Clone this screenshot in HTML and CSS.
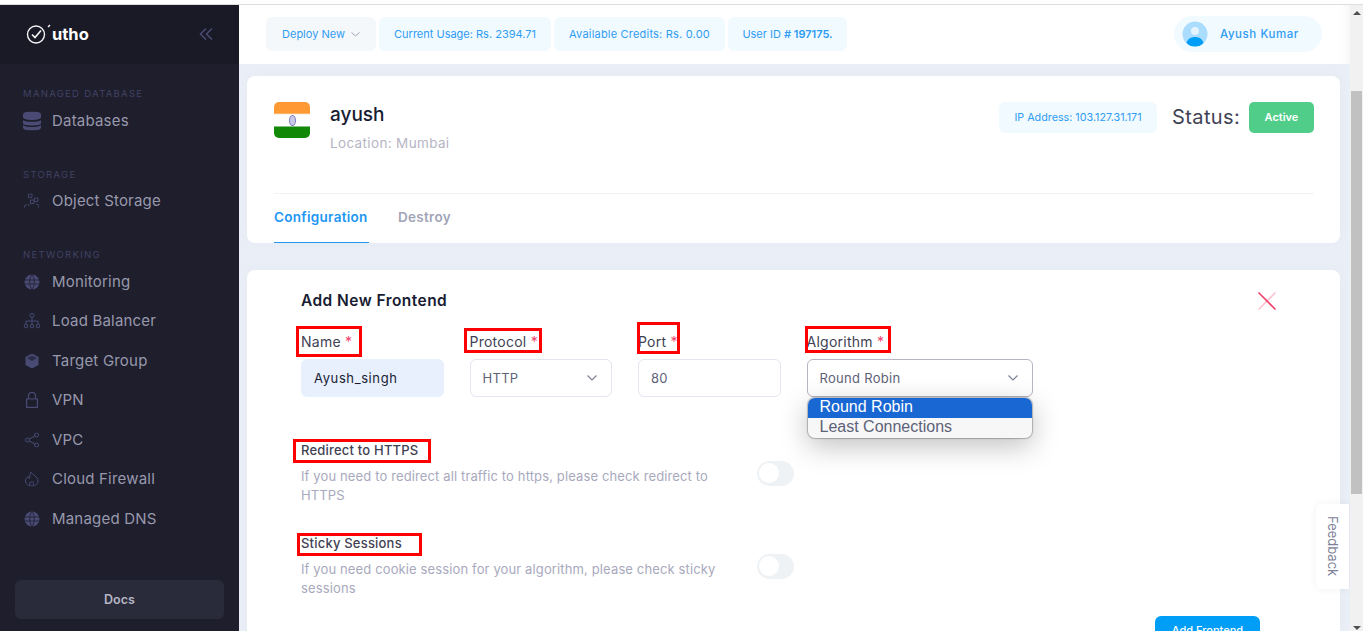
FILE: index.html
```html
<!DOCTYPE html>
<html lang="en">
<head>
    <meta charset="UTF-8">
    <meta name="viewport" content="width=device-width, initial-scale=1.0">
    <title>Utho - Add New Frontend</title>
    <link rel="stylesheet" href="styles.css">
</head>
<body>
    <div class="top-line"></div>
    <div class="app">
        <aside class="sidebar">
            <div class="brand">
                <div class="logo">
                    <svg width="26" height="24" viewBox="0 0 26 24" fill="none" stroke="#f4f4f4">
                        <circle cx="10" cy="12.500" r="8.500" stroke-width="1.400"/>
                        <path d="M6 12.500l3 3L15 8.500" stroke-width="1.700"/>
                        <path d="M24 3l-2 2" stroke-width="1.500"/>
                    </svg>
                    <span>utho</span>
                </div>
                <svg class="collapse" width="14" height="12" viewBox="0 0 14 12" fill="none" stroke="#494b74" stroke-width="1.5">
                    <path d="M7 .5L1.5 6 7 11.5M13 .5L7.500 6l5.500 5.500"/>
                </svg>
            </div>
            <nav class="nav">
                <div class="nav-label">MANAGED DATABASE</div>
                <a class="nav-item">
                    <svg width="18" height="19" viewBox="0 0 18 19" fill="#494b74">
                        <path d="M0 3c0-2 3-3 9-3s9 1 9 3v3c0 .8-3 2.500-9 2.500S0 6.800 0 6z"/>
                        <path d="M0 8.500C2 10 5 10.300 9 10.300s7-.3 9-1.800V12c0 1-3 2-9 2s-9-1-9-2z"/>
                        <path d="M0 13.800C2 15.200 5 15.500 9 15.500s7-.3 9-1.700V16c0 2-3 3-9 3s-9-1-9-3z"/>
                    </svg>
                    Databases
                </a>
                <div class="nav-label nav-gap">STORAGE</div>
                <a class="nav-item">
                    <svg width="16" height="15" viewBox="0 0 16 15" fill="none" stroke="#494b74" stroke-width=".9">
                        <path d="M4.500.5h3.500v3.500H4.500zM10.500 4.500H14V8h-3.500zM6.500 6.500H10V10H6.500z"/>
                        <path d="M.5 14v-2.500h6M14.500 14v-3h-3" stroke-dasharray="2 1"/>
                    </svg>
                    Object Storage
                </a>
                <div class="nav-label nav-gap">NETWORKING</div>
                <a class="nav-item">
                    <svg width="16" height="16" viewBox="0 0 16 16" fill="#494b74">
                        <circle cx="8" cy="8" r="7.500"/>
                        <path d="M.5 6h15M.5 10h15M8 .5C5 4 5 12 8 15.500M8 .5c3 3.500 3 11.500 0 15" fill="none" stroke="#1e1e2d" stroke-width=".8"/>
                    </svg>
                    Monitoring
                </a>
                <a class="nav-item">
                    <svg width="18" height="16" viewBox="0 0 18 16" fill="none" stroke="#494b74">
                        <circle cx="9" cy="2.500" r="2"/>
                        <path d="M9 4.500V11M3 11V8h12v3"/>
                        <circle cx="3" cy="13" r="1.800"/><circle cx="9" cy="13" r="1.800"/><circle cx="15" cy="13" r="1.800"/>
                    </svg>
                    Load Balancer
                </a>
                <a class="nav-item">
                    <svg width="14" height="15" viewBox="0 0 14 15" fill="#494b74">
                        <path d="M7 0l6.500 3.500v8L7 15 .5 11.500v-8z"/>
                        <path d="M7 7.500L2 4.500 7 2l5 2.500z" fill="#2c2d4a"/>
                    </svg>
                    Target Group
                </a>
                <a class="nav-item">
                    <svg width="12" height="16" viewBox="0 0 12 16" fill="none" stroke="#494b74" stroke-width="1.200">
                        <path d="M.6 7h10.800v8.400H.6zM2.500 7V4a3.500 3.500 0 017 0v3"/>
                    </svg>
                    VPN
                </a>
                <a class="nav-item">
                    <svg width="14" height="15" viewBox="0 0 14 15" fill="none" stroke="#494b74">
                        <circle cx="2.500" cy="7.500" r="2"/><circle cx="11.500" cy="2.500" r="2"/><circle cx="11.500" cy="12.500" r="2"/>
                        <path d="M4.300 6.500l5.400-3M4.300 8.500l5.400 3"/>
                    </svg>
                    VPC
                </a>
                <a class="nav-item">
                    <svg width="14" height="15" viewBox="0 0 14 15" fill="none" stroke="#494b74">
                        <path d="M6 .5c1 2.500 7 4.500 7 9 0 3-2.500 5-6 5s-6.500-2-6.500-5c0-2 1-3.500 2.500-4.500.2 1.500 1 2 1.500 2C5 5 4.500 3 6 .5z"/>
                        <path d="M5 14c-1-2 0-3.500 1-4 0 1 1 1 1.500 0 1 1 1.500 2.500.5 4"/>
                    </svg>
                    Cloud Firewall
                </a>
                <a class="nav-item">
                    <svg width="16" height="16" viewBox="0 0 16 16" fill="#494b74">
                        <circle cx="8" cy="8" r="7.500"/>
                        <path d="M.5 6h15M.5 10h15M8 .5C5 4 5 12 8 15.500M8 .5c3 3.500 3 11.500 0 15" fill="none" stroke="#1e1e2d" stroke-width=".8"/>
                    </svg>
                    Managed DNS
                </a>
            </nav>
            <a class="docs">Docs</a>
        </aside>

        <main class="main">
            <header class="topbar">
                <div class="pill pill-grey">Deploy New
                    <svg width="9" height="5" viewBox="0 0 9 5" fill="none" stroke="#a1a5b7"><path d="M.5.500l4 3.500 4-3.500"/></svg>
                </div>
                <div class="pill pill-usage">Current Usage: Rs. 2394.71</div>
                <div class="pill pill-credits">Available Credits: Rs. 0.00</div>
                <div class="pill pill-user">User ID <b># 197175.</b></div>
                <div class="profile">
                    <svg width="26" height="26" viewBox="0 0 26 26">
                        <circle cx="13" cy="13" r="12.500" fill="#a9dcfd"/>
                        <circle cx="13" cy="10" r="4" fill="#e4f4fe"/>
                        <path d="M4.500 22c1-4 4.500-6 8.500-6s7.500 2 8.500 6c-2 2.500-5 3.500-8.500 3.500S6.500 24.500 4.500 22z" fill="#009ef7"/>
                    </svg>
                    Ayush Kumar
                </div>
            </header>

            <div class="content">
                <section class="card summary">
                    <div class="summary-top">
                        <div class="flag"><span class="chakra"></span></div>
                        <div class="summary-title">
                            <h2>ayush</h2>
                            <p>Location: Mumbai</p>
                        </div>
                        <div class="ip-pill">IP Address: 103.127.31.171</div>
                        <div class="status-text">Status:</div>
                        <div class="status-badge">Active</div>
                    </div>
                    <div class="tabs">
                        <a class="tab tab-active">Configuration</a>
                        <a class="tab">Destroy</a>
                    </div>
                </section>

                <section class="card form-card">
                    <div class="form-head">
                        <h3>Add New Frontend</h3>
                        <svg width="20" height="20" viewBox="0 0 20 20" stroke-width="1.600">
                            <path d="M1.500 18.500l17-17" stroke="#ffc2d0"/>
                            <path d="M1.500 1.500l17 17" stroke="#f1416c"/>
                        </svg>
                    </div>
                    <div class="form-row">
                        <div class="field">
                            <label>Name <i>*</i></label>
                            <div class="input input-filled">Ayush_singh</div>
                        </div>
                        <div class="field">
                            <label>Protocol <i>*</i></label>
                            <div class="input">HTTP
                                <svg width="10" height="6" viewBox="0 0 10 6" fill="none" stroke="#7e8299" stroke-width="1.200"><path d="M.5.500L5 5 9.500.5"/></svg>
                            </div>
                        </div>
                        <div class="field">
                            <label>Port <i>*</i></label>
                            <div class="input">80</div>
                        </div>
                        <div class="field field-open">
                            <label>Algorithm <i>*</i></label>
                            <div class="input input-open">Round Robin
                                <svg width="10" height="6" viewBox="0 0 10 6" fill="none" stroke="#7e8299" stroke-width="1.200"><path d="M.5.500L5 5 9.500.5"/></svg>
                            </div>
                            <div class="dropdown">
                                <div class="option option-selected">Round Robin</div>
                                <div class="option">Least Connections</div>
                            </div>
                        </div>
                    </div>

                    <div class="setting setting-first">
                        <div class="setting-text">
                            <h4>Redirect to HTTPS</h4>
                            <p>If you need to redirect all traffic to https, please check redirect to HTTPS</p>
                        </div>
                        <div class="toggle"><span></span></div>
                    </div>
                    <div class="setting">
                        <div class="setting-text">
                            <h4>Sticky Sessions</h4>
                            <p>If you need cookie session for your algorithm, please check sticky sessions</p>
                        </div>
                        <div class="toggle"><span></span></div>
                    </div>
                    <div class="form-actions">
                        <button class="btn-add">Add Frontend</button>
                    </div>
                </section>
            </div>
            <div class="feedback"><span>Feedback</span></div>
        </main>

        <div class="scrollbar">
            <div class="arrow-up"></div>
            <div class="thumb"></div>
            <div class="arrow-down"></div>
        </div>
    </div>

    <!-- red boxes drawn on top of the screenshot -->
    <div class="mark mark-name"></div>
    <div class="mark mark-protocol"></div>
    <div class="mark mark-port"></div>
    <div class="mark mark-algorithm"></div>
    <div class="mark mark-redirect"></div>
    <div class="mark mark-sticky"></div>
</body>
</html>
```

FILE: styles.css
```css
* {
    box-sizing: border-box;
}

body {
    position: relative;
    margin: 0;
    height: 631px;
    overflow: hidden;
    background-color: #ffffff;
    font-family: "Inter", "Liberation Sans", sans-serif;
    color: #3f4254;
}

h2, h3, h4, p {
    margin: 0;
}

.top-line {
    height: 5px;
    border-bottom: 1px solid #dedede;
}

.app {
    display: flex;
    height: 626px;
}

/* Sidebar */
.sidebar {
    display: flex;
    flex-direction: column;
    flex: 0 0 239px;
    background-color: #1e1e2d;
}

.brand {
    display: flex;
    align-items: center;
    justify-content: space-between;
    height: 59px;
    padding: 0 26px 2px 26px;
    background-color: #1a1a27;
}

.logo {
    display: flex;
    align-items: center;
    color: #ffffff;
    font-size: 16.5px;
    font-weight: 700;
}

.nav {
    padding-top: 21px;
}

.nav-label {
    height: 16px;
    padding-left: 23px;
    font-size: 9.5px;
    line-height: 17px;
    letter-spacing: 1.3px;
    color: #414263;
}

.nav-gap {
    margin-top: 25px;
}

.nav-item {
    display: flex;
    align-items: center;
    height: 39.5px;
    padding: 0 0 1px 52px;
    position: relative;
    font-size: 15px;
    letter-spacing: 0.2px;
    color: #9899ac;
}

.nav-item svg {
    position: absolute;
    left: 32px;
    top: 50%;
    transform: translate(-50%, -50%);
}

.docs {
    margin: auto 15px 12px;
    height: 39px;
    border-radius: 6px;
    background-color: #2a2b3a;
    color: #b5b5c3;
    font-size: 12.5px;
    font-weight: 600;
    line-height: 39px;
    text-align: center;
}

/* Main column */
.main {
    position: relative;
    display: flex;
    flex-direction: column;
    flex: 1;
    min-width: 0;
    background-color: #eaeff7;
    overflow: hidden;
}

.topbar {
    display: flex;
    align-items: center;
    flex: 0 0 59px;
    gap: 3px;
    padding: 0 28px 1px 27px;
    background-color: #ffffff;
    box-shadow: inset -14px 0 12px -12px rgba(0, 0, 0, 0.05);
}

.pill {
    display: flex;
    align-items: center;
    justify-content: center;
    height: 34px;
    border-radius: 6px;
    background-color: #f1faff;
    color: #2f9cf3;
    font-size: 11px;
}

.pill b {
    font-weight: 600;
    margin-left: 3px;
}

.pill-grey {
    gap: 6px;
    width: 110px;
    background-color: #f5f8fa;
}

.pill-usage {
    width: 172px;
}

.pill-credits {
    width: 171px;
    letter-spacing: 0.2px;
}

.pill-user {
    width: 119px;
}

.profile {
    display: flex;
    align-items: center;
    gap: 12px;
    width: 148px;
    height: 36px;
    margin-left: auto;
    padding-left: 8px;
    border-radius: 18px;
    background-color: #f1faff;
    color: #2f9cf3;
    font-size: 11.5px;
    font-weight: 500;
    letter-spacing: 0.55px;
}

.content {
    padding: 12px 10px 0 8px;
}

.card {
    border-radius: 8px;
    background-color: #ffffff;
    box-shadow: 0 0 10px rgba(76, 87, 125, 0.04);
}

/* Summary card */
.summary {
    height: 167px;
    padding: 26px 26px 0 27px;
}

.summary-top {
    display: flex;
    align-items: flex-start;
    height: 92px;
    border-bottom: 1px solid #eff2f5;
}

.flag {
    display: flex;
    align-items: center;
    justify-content: center;
    width: 36px;
    height: 36px;
    border-radius: 5px;
    background: linear-gradient(#ff9933 31%, #ffffff 35%, #ffffff 66%, #128807 70%);
}

.chakra {
    width: 7px;
    height: 11px;
    border: 1.5px solid #7f7fc0;
    border-radius: 50%;
    background-color: #c9c9e6;
}

.summary-title {
    flex: 1;
    margin-left: 20px;
}

.summary-title h2 {
    font-size: 19px;
    font-weight: 500;
    line-height: 26px;
    color: #181c32;
}

.summary-title p {
    margin-top: 5px;
    font-size: 13.5px;
    line-height: 20px;
    letter-spacing: 0.35px;
    color: #b5b5c3;
}

.ip-pill {
    width: 158px;
    height: 31px;
    border-radius: 6px;
    background-color: #f1faff;
    color: #2f9cf3;
    font-size: 10.75px;
    line-height: 31px;
    text-align: center;
}

.status-text {
    width: 68px;
    margin-left: 15px;
    font-size: 20px;
    line-height: 30px;
    letter-spacing: 0.4px;
}

.status-badge {
    width: 65px;
    height: 31px;
    margin-left: 9px;
    border-radius: 5px;
    background-color: #50cd89;
    color: #ffffff;
    font-size: 11px;
    font-weight: 600;
    line-height: 31px;
    text-align: center;
}

.tabs {
    display: flex;
    gap: 29px;
}

.tab {
    height: 49px;
    font-size: 13.5px;
    font-weight: 600;
    line-height: 47px;
    letter-spacing: 0.3px;
    color: #a1a5b7;
}

.tab-active {
    width: 95px;
    border-bottom: 1px solid #2196f3;
    color: #2196f3;
}

/* Add frontend form */
.form-card {
    margin-top: 27px;
    padding: 19px 63px 40px 54px;
}

.form-head {
    display: flex;
    align-items: center;
    justify-content: space-between;
    height: 22px;
}

.form-head h3 {
    font-size: 15.5px;
    font-weight: 600;
    letter-spacing: 0.45px;
    color: #181c32;
}

.form-head svg {
    margin-top: 1px;
}

.form-row {
    display: grid;
    grid-template-columns: repeat(3, 142.500px) 226px;
    column-gap: 26px;
    margin-top: 20px;
}

.field {
    position: relative;
}

.field label {
    display: block;
    height: 28px;
    font-size: 14px;
    line-height: 22px;
    letter-spacing: 0.25px;
}

.field label i {
    font-style: normal;
    color: #f1416c;
}

.input {
    display: flex;
    align-items: center;
    justify-content: space-between;
    height: 38px;
    padding: 0 14px 0 12px;
    border: 1px solid #e4e6ef;
    border-radius: 6px;
    font-size: 13px;
    letter-spacing: 0.3px;
    color: #5e6278;
}

.input-filled {
    border-color: #e8f0fe;
    background-color: #e8f0fe;
    color: #181c32;
    letter-spacing: 0.6px;
}

.input-open {
    border-color: #b5b5c3;
}

.dropdown {
    position: absolute;
    left: 1px;
    right: 1px;
    top: 67px;
    overflow: hidden;
    border-radius: 7px;
    background-color: #f7f7f7;
    box-shadow: 0 0 1px 1px rgba(0, 0, 0, 0.25), 0 8px 28px rgba(0, 0, 0, 0.25);
    font-family: "Liberation Sans", sans-serif;
    font-size: 16px;
}

.option {
    height: 20px;
    padding-left: 12px;
    line-height: 18px;
    color: #5e6278;
}

.option-selected {
    background-color: #1967d2;
    color: #ffffff;
}

.setting {
    display: flex;
    align-items: center;
    gap: 26px;
    margin-top: 29px;
}

.setting-first {
    margin-top: 43px;
}

.setting-text {
    width: 430px;
}

.setting-text h4 {
    font-size: 13px;
    font-weight: 500;
    line-height: 20px;
    letter-spacing: 0.2px;
}

.setting-text p {
    margin-top: 7px;
    font-size: 13px;
    line-height: 18.500px;
    letter-spacing: 0.13px;
    color: #a8a9bd;
}

.toggle {
    width: 37px;
    height: 25px;
    margin-top: 2px;
    padding: 2.500px 0 0 2px;
    border-radius: 13px;
    background-color: #eff2f5;
}

.toggle span {
    display: block;
    width: 20px;
    height: 20px;
    border-radius: 50%;
    background-color: #ffffff;
}

.form-actions {
    display: flex;
    justify-content: flex-end;
    margin: 19px 17px 0 0;
}

.btn-add {
    display: block;
    width: 105px;
    height: 36px;
    padding: 0 0 8px;
    border: 0;
    border-radius: 6px;
    background-color: #009ef7;
    color: #ffffff;
    font-family: inherit;
    font-size: 11px;
    font-weight: 500;
    line-height: 18px;
}

.feedback {
    position: absolute;
    right: 1px;
    top: 499px;
    width: 33px;
    height: 85px;
    border-radius: 6px 0 0 6px;
    background-color: #ffffff;
    box-shadow: 0 0 8px rgba(0, 0, 0, 0.06);
    display: flex;
    align-items: center;
    justify-content: center;
}

.feedback span {
    writing-mode: vertical-rl;
    font-size: 13px;
    color: #7e8299;
}

/* Fake window scrollbar */
.scrollbar {
    display: flex;
    flex-direction: column;
    align-items: center;
    flex: 0 0 13px;
    background-color: #f1f1f1;
}

.arrow-up,
.arrow-down {
    width: 0;
    height: 0;
    border-left: 4px solid transparent;
    border-right: 4px solid transparent;
}

.arrow-up {
    margin-top: 6px;
    border-bottom: 4px solid #505050;
}

.arrow-down {
    margin-top: auto;
    margin-bottom: 1px;
    border-top: 4px solid #505050;
}

.thumb {
    width: 11px;
    height: 403px;
    margin-top: 76px;
    background-color: #c1c1c1;
}

/* Red annotation boxes */
.mark {
    position: absolute;
    border: 3px solid #ff0000;
}

.mark-name { left: 296px; top: 326px; width: 66px; height: 31px; }
.mark-protocol { left: 464px; top: 328px; width: 78px; height: 25px; }
.mark-port { left: 637px; top: 322px; width: 43px; height: 32px; }
.mark-algorithm { left: 805px; top: 326px; width: 86px; height: 27px; }
.mark-redirect { left: 293px; top: 439px; width: 138px; height: 24px; }
.mark-sticky { left: 297px; top: 533px; width: 125px; height: 23px; }
```
